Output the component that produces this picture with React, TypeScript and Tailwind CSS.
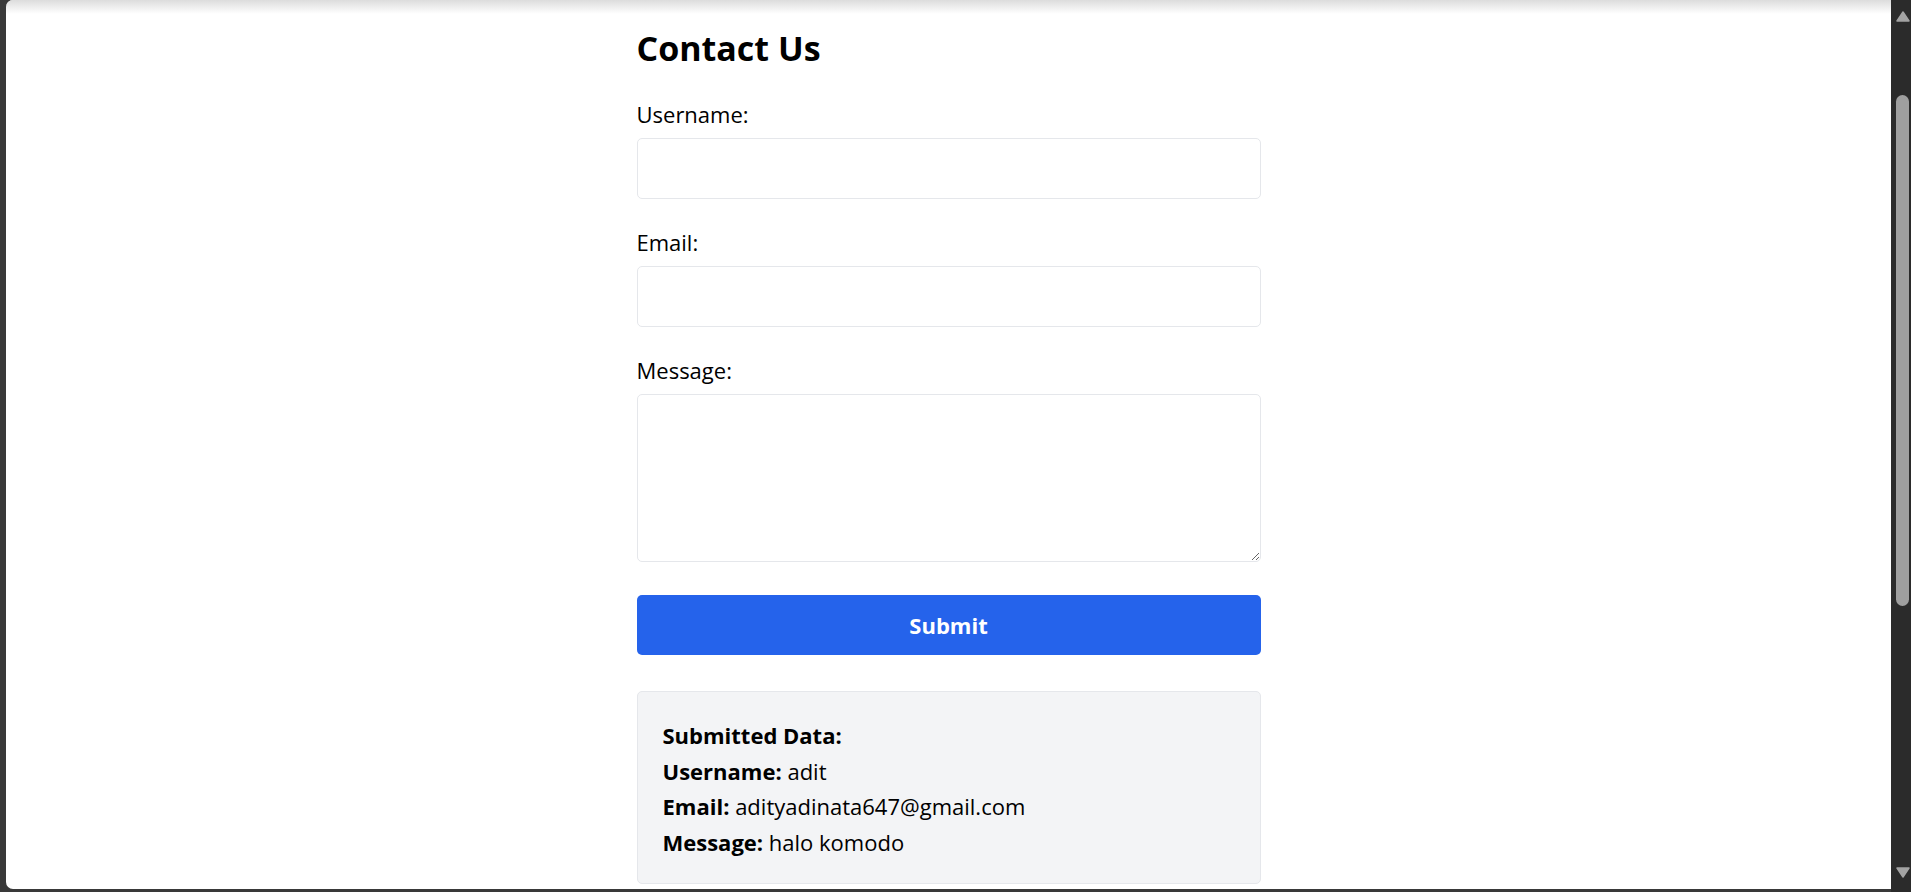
import React, { useState } from "react";

interface FormData {
  username: string;
  email: string;
  message: string;
}

const ScrollArrow: React.FC<{ down?: boolean }> = ({ down }) => (
  <svg width="14" height="11" viewBox="0 0 14 11" className="block shrink-0">
    <path
      d={down ? "M1 1 H13 L7 10 Z" : "M7 1 L13 10 H1 Z"}
      fill="#a3a3a3"
      stroke="#a3a3a3"
      strokeLinejoin="round"
      strokeWidth="1.5"
    />
  </svg>
);

const ContactForm: React.FC = () => {
  const [form, setForm] = useState<FormData>({ username: "", email: "", message: "" });
  const [submitted, setSubmitted] = useState<FormData | null>({
    username: "adit",
    email: "adityadinata647@gmail.com",
    message: "halo komodo",
  });

  const handleChange = (e: React.ChangeEvent<HTMLInputElement | HTMLTextAreaElement>) => {
    setForm({ ...form, [e.target.name]: e.target.value });
  };

  const handleSubmit = (e: React.FormEvent) => {
    e.preventDefault();
    setSubmitted(form);
  };

  return (
    <div className="mx-auto w-[624px] pt-[26px]">
      <h1 className="mb-[26px] text-[34px] font-bold leading-[45px] text-black">Contact Us</h1>
      <form onSubmit={handleSubmit} className="flex flex-col">
        <label htmlFor="username" className="mb-[6px] leading-[35px]">
          Username:
        </label>
        <input
          id="username"
          name="username"
          type="text"
          value={form.username}
          onChange={handleChange}
          className="mb-[26px] h-[61px] w-full rounded-[5px] border border-[#e5e7eb] px-[12px] outline-none"
        />

        <label htmlFor="email" className="mb-[6px] leading-[35px]">
          Email:
        </label>
        <input
          id="email"
          name="email"
          type="email"
          value={form.email}
          onChange={handleChange}
          className="mb-[26px] h-[61px] w-full rounded-[5px] border border-[#e5e7eb] px-[12px] outline-none"
        />

        <label htmlFor="message" className="mb-[6px] leading-[35px]">
          Message:
        </label>
        <textarea
          id="message"
          name="message"
          value={form.message}
          onChange={handleChange}
          className="mb-[33px] h-[168px] w-full rounded-[5px] border border-[#e5e7eb] p-[12px] outline-none"
        />

        <button
          type="submit"
          className="h-[60px] w-full rounded-[5px] bg-[#2563eb] font-bold text-white"
        >
          Submit
        </button>
      </form>

      {submitted && (
        <div className="mt-[36px] rounded-[5px] border border-[#e5e7eb] bg-[#f3f4f6] pt-[26px] pb-[23px] pl-[25px] leading-[35.6px]">
          <h2 className="font-bold">Submitted Data:</h2>
          <p>
            <strong>Username:</strong> {submitted.username}
          </p>
          <p>
            <strong>Email:</strong> {submitted.email}
          </p>
          <p>
            <strong>Message:</strong> {submitted.message}
          </p>
        </div>
      )}
    </div>
  );
};

export default function App() {
  return (
    <div className="flex h-[892px] w-[1911px] overflow-hidden bg-[#393939] font-['Open_Sans',sans-serif] text-[22px] text-black">
      <div className="flex flex-1 pb-[3px] pl-[6px]">
        <div className="relative flex-1 overflow-hidden rounded-l-[7px] bg-white">
          <div className="pointer-events-none absolute inset-x-0 top-0 h-[14px] bg-linear-to-b from-[#dcdcdc] to-white/0" />
          <ContactForm />
        </div>
      </div>

      {/* window scrollbar */}
      <div className="flex w-[20px] flex-col bg-[#2b2b2b] pl-[5px] pr-[1px]">
        <div className="pt-[11px]">
          <ScrollArrow />
        </div>
        <div className="mt-[73px] h-[511px] w-[13px] shrink-0 rounded-full bg-[#9f9f9f]" />
        <div className="mt-[261px]">
          <ScrollArrow down />
        </div>
      </div>
    </div>
  );
}
